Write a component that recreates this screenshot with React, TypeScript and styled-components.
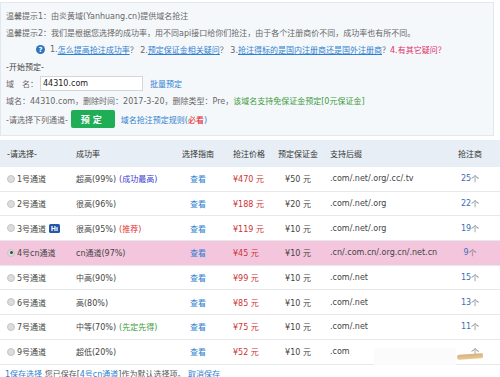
import * as React from 'react'
import styled, { createGlobalStyle } from 'styled-components'

const GlobalStyle = createGlobalStyle`
  html, body {
    margin: 0;
    padding: 0;
    background: #fff;
  }
  body {
    font-family: "DejaVu Sans", "Noto Sans CJK SC", sans-serif;
    font-size: 8px;
    color: #555;
    overflow: hidden;
  }
`

const SPage = styled.div`
  width: 500px;
  height: 377px;
  overflow: hidden;
`
const SPanel = styled.div`
  width: 492px;
  margin-top: 2px;
  border: 1px solid #e2e8ee;
  background: #f5f8fb;
  padding: 4px 5px 7px;
  box-sizing: border-box;
  width: 494px;
`
const SLine = styled.div<{ $indent?: number; $dark?: boolean }>`
  display: flex;
  align-items: center;
  height: 17px;
  padding-left: ${p => p.$indent || 0}px;
  color: ${p => (p.$dark ? '#444' : '#666')};
  white-space: nowrap;
`
const SHelp = styled.span`
  display: inline-flex;
  align-items: center;
  justify-content: center;
  width: 9px;
  height: 9px;
  border-radius: 50%;
  background: #2e74c0;
  color: #fff;
  font-size: 7px;
  font-weight: bold;
  margin-right: 5px;
`
const SLink = styled.span<{ $underline?: boolean }>`
  color: #2f7fd0;
  text-decoration: ${p => (p.$underline ? 'underline' : 'none')};
`
const SRed = styled.span`
  color: #e0306a;
`
const SGreen = styled.span`
  color: #3c9a3c;
`
const SInput = styled.div`
  width: 103px;
  height: 15px;
  box-sizing: border-box;
  border: 1px solid #d3d7dc;
  background: #fff;
  color: #222;
  display: flex;
  align-items: center;
  padding-left: 2px;
  margin: 0 7px 0 2px;
`
const SChooseRow = styled.div`
  display: flex;
  align-items: center;
  height: 18px;
  margin-top: 1px;
  color: #666;
`
const SButton = styled.div`
  width: 44px;
  height: 18px;
  margin: 0 6px 0 3px;
  background: #1fae55;
  border-radius: 2px;
  color: #fff;
  font-weight: bold;
  font-size: 9px;
  display: flex;
  align-items: center;
  justify-content: center;
  letter-spacing: 3px;
`
const SMust = styled.span`
  color: #e02020;
`

const cols = '76px 100px 44px 50px 56px 114px 1fr'

const STable = styled.div`
  margin-top: 4px;
  width: 500px;
`
const SHead = styled.div`
  display: grid;
  grid-template-columns: ${cols};
  height: 27px;
  align-items: center;
  background: #e7eef5;
  color: #333;
`
const SRow = styled.div<{ $active?: boolean }>`
  display: grid;
  grid-template-columns: ${cols};
  height: 24.7px;
  box-sizing: border-box;
  align-items: center;
  border-bottom: 1px solid #e6e8ea;
  background: ${p => (p.$active ? '#f3c6dd' : '#fff')};
  color: #444;
`
const SCell = styled.div<{ $align?: string; $pad?: number }>`
  position: relative;
  display: flex;
  align-items: center;
  justify-content: ${p => p.$align || 'flex-start'};
  padding-left: ${p => p.$pad || 0}px;
  white-space: nowrap;
`
const SRadio = styled.span<{ $checked?: boolean }>`
  display: inline-flex;
  align-items: center;
  justify-content: center;
  width: 8px;
  height: 8px;
  border-radius: 50%;
  box-sizing: border-box;
  border: 1px solid #c4c4c4;
  background: #dcdcdc;
  margin-right: 2px;
  &::after {
    content: '';
    display: ${p => (p.$checked ? 'block' : 'none')};
    width: 3px;
    height: 3px;
    border-radius: 50%;
    background: #444;
  }
`
const SBadge = styled.span`
  margin-left: 3px;
  display: inline-flex;
`
const STag = styled.span<{ $color: string }>`
  color: ${p => p.$color};
  margin-left: 3px;
`
const SView = styled.span`
  color: #2f7fd0;
`
const SPrice = styled.span`
  color: #cc3333;
`
const SCount = styled.span`
  color: #3a6db8;
`
const SUnit = styled.span`
  color: #777;
`
const SSmudge = styled.span`
  position: absolute;
  left: -4px;
  top: 8px;
  width: 26px;
  height: 5px;
  border-radius: 4px 2px 3px 4px;
  background: linear-gradient(#d8b27a, #e8c896);
  transform: rotate(-4deg);
`
const SGlow = styled.span`
  position: absolute;
  left: -87px;
  top: 2px;
  width: 82px;
  height: 17px;
  background: #fbfbfb;
`
const SFooter = styled.div`
  display: flex;
  align-items: center;
  height: 14px;
  padding-left: 5px;
  margin-top: 2px;
  color: #555;
  white-space: nowrap;
`

type Row = {
  name: string
  rate: string
  tag?: [string, string]
  price: string
  deposit: string
  suffix: string
  count: string
  active?: boolean
  badge?: boolean
  smudge?: boolean
}

const rows: Row[] = [
  { name: '1号通道', rate: '超高(99%)', tag: ['(成功最高)', '#3b3bd0'], price: '¥470 元', deposit: '¥50 元', suffix: '.com/.net/.org/.cc/.tv', count: '25' },
  { name: '2号通道', rate: '很高(96%)', price: '¥188 元', deposit: '¥20 元', suffix: '.com/.net/.org', count: '22' },
  { name: '3号通道', rate: '很高(95%)', tag: ['(推荐)', '#e03333'], price: '¥119 元', deposit: '¥10 元', suffix: '.com/.net/.org', count: '19', badge: true },
  { name: '4号cn通道', rate: 'cn通道(97%)', price: '¥45 元', deposit: '¥10 元', suffix: '.cn/.com.cn/.org.cn/.net.cn', count: '9', active: true },
  { name: '5号通道', rate: '中高(90%)', price: '¥99 元', deposit: '¥10 元', suffix: '.com/.net', count: '15' },
  { name: '6号通道', rate: '高(80%)', price: '¥85 元', deposit: '¥10 元', suffix: '.com/.net', count: '13' },
  { name: '7号通道', rate: '中等(70%)', tag: ['(先定先得)', '#3c9a3c'], price: '¥75 元', deposit: '¥10 元', suffix: '.com/.net', count: '11' },
  { name: '9号通道', rate: '超低(20%)', price: '¥52 元', deposit: '¥10 元', suffix: '.com', count: '', smudge: true }
]

const Badge = () => (
  <SBadge>
    <svg width="11" height="9" viewBox="0 0 11 9">
      <rect x="0" y="0" width="11" height="9" rx="1.5" fill="#2758a8" />
      <path d="M3 2v5M3 4.5h3M6 2v5M8 3v4" stroke="#fff" strokeWidth="1.2" fill="none" />
    </svg>
  </SBadge>
)

const App = () => (
  <SPage>
    <GlobalStyle />
    <SPanel>
      <SLine>温馨提示1：由炎黄域(Yanhuang.cn)提供域名抢注</SLine>
      <SLine>温馨提示2：我们是根据您选择的成功率，用不同api接口给你们抢注，由于各个注册商价不同，成功率也有所不同。</SLine>
      <SLine $indent={30}>
        <SHelp>?</SHelp>
        1.<SLink $underline>怎么提高抢注成功率</SLink>？ 2.<SLink $underline>预定保证金相关疑问</SLink>？ 3.
        <SLink $underline>抢注得标的是国内注册商还是国外注册商</SLink>？ <SRed>4.有其它疑问？</SRed>
      </SLine>
      <SLine $dark>-开始预定-</SLine>
      <SLine>
        域　名：
        <SInput>44310.com</SInput>
        <SLink>批量预定</SLink>
      </SLine>
      <SLine>
        域名：44310.com，删除时间：2017-3-20，删除类型：Pre，
        <SGreen>该域名支持免保证金预定[0元保证金]</SGreen>
      </SLine>
      <SChooseRow>
        -请选择下列通道-
        <SButton>预定</SButton>
        <SLink>
          域名抢注预定规则(<SMust>必看</SMust>)
        </SLink>
      </SChooseRow>
    </SPanel>
    <STable>
      <SHead>
        <SCell $pad={7}>-请选择-</SCell>
        <SCell>成功率</SCell>
        <SCell $align="center">选择指南</SCell>
        <SCell $pad={13}>抢注价格</SCell>
        <SCell $align="center">预定保证金</SCell>
        <SCell $pad={4}>支持后缀</SCell>
        <SCell $align="center">抢注商</SCell>
      </SHead>
      {rows.map(r => (
        <SRow key={r.name} $active={r.active}>
          <SCell $pad={7}>
            <SRadio $checked={r.active} />
            {r.name}
            {r.badge && <Badge />}
          </SCell>
          <SCell>
            {r.rate}
            {r.tag && <STag $color={r.tag[1]}>{r.tag[0]}</STag>}
          </SCell>
          <SCell $align="center">
            <SView>查看</SView>
          </SCell>
          <SCell $pad={13}>
            <SPrice>{r.price}</SPrice>
          </SCell>
          <SCell $align="center">{r.deposit}</SCell>
          <SCell $pad={4}>{r.suffix}</SCell>
          <SCell $align="center">
            {r.smudge ? (
              <span style={{ position: 'relative', paddingLeft: 10 }}>
                <SGlow />
                <SUnit>个</SUnit>
                <SSmudge />
              </span>
            ) : (
              <>
                <SCount>{r.count}</SCount>
                <SUnit>个</SUnit>
              </>
            )}
          </SCell>
        </SRow>
      ))}
    </STable>
    <SFooter>
      <SLink>1保存选择</SLink>&nbsp;您已保存[<SLink $underline>4号cn通道</SLink>]作为默认选择项。&nbsp;
      <SLink>取消保存</SLink>
    </SFooter>
  </SPage>
)

export default App
